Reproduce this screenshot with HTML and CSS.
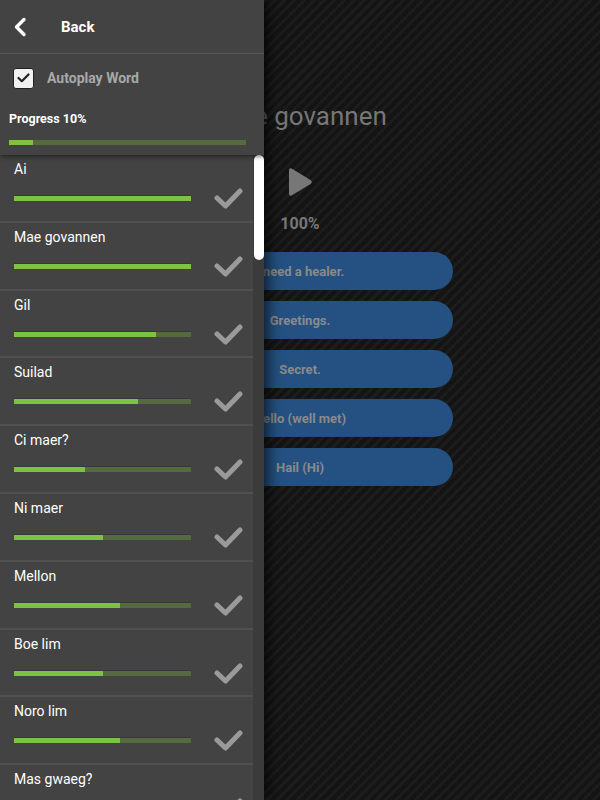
FILE: index.html
```html
<!DOCTYPE html>
<html>
<head>
<meta charset="utf-8">
<link rel="stylesheet" href="styles.css">
</head>
<body>
<div class="app">
  <main class="main">
    <h1 class="title">Mae govannen</h1>
    <svg class="play" width="28" height="32" viewBox="0 0 28 32"><path d="M3 4.5 Q3 1 6 2.8 L24.5 14 Q27 16 24.5 18 L6 29.2 Q3 31 3 27.5 Z" fill="#777"/></svg>
    <div class="pct">100%</div>
    <div class="answers">
      <div class="answer">I need a healer.</div>
      <div class="answer">Greetings.</div>
      <div class="answer">Secret.</div>
      <div class="answer">Hello (well met)</div>
      <div class="answer">Hail (Hi)</div>
    </div>
  </main>
  <aside class="drawer">
    <div class="head">
      <div class="back">
        <svg class="chev" width="14" height="20" viewBox="0 0 14 20"><polyline points="11,2.5 3.5,10 11,17.5" fill="none" stroke="#fff" stroke-width="3.4" stroke-linecap="round" stroke-linejoin="round"/></svg>
        <span class="back-text">Back</span>
      </div>
      <div class="auto">
        <span class="box"><svg width="13" height="10" viewBox="0 0 13 10"><polyline points="1.5,5 4.8,8.2 11.5,1.5" fill="none" stroke="#222" stroke-width="2.2" stroke-linecap="round" stroke-linejoin="round"/></svg></span>
        <span class="auto-text">Autoplay Word</span>
      </div>
      <div class="prog-label">Progress 10%</div>
      <div class="prog"><div class="prog-fill" style="width:10%"></div></div>
    </div>
    <div class="body">
      <div class="list">
        <div class="item"><div class="name">Ai</div><div class="row"><div class="bar"><div class="fill" style="width:100%"></div></div><svg class="ok" width="30" height="22" viewBox="0 0 30 22"><polyline points="3,11 11.5,19 26,4" fill="none" stroke="#9a9a9a" stroke-width="5" stroke-linecap="round" stroke-linejoin="round"/></svg></div></div>
        <div class="item"><div class="name">Mae govannen</div><div class="row"><div class="bar"><div class="fill" style="width:100%"></div></div><svg class="ok" width="30" height="22" viewBox="0 0 30 22"><polyline points="3,11 11.5,19 26,4" fill="none" stroke="#9a9a9a" stroke-width="5" stroke-linecap="round" stroke-linejoin="round"/></svg></div></div>
        <div class="item"><div class="name">Gil</div><div class="row"><div class="bar"><div class="fill" style="width:80%"></div></div><svg class="ok" width="30" height="22" viewBox="0 0 30 22"><polyline points="3,11 11.5,19 26,4" fill="none" stroke="#9a9a9a" stroke-width="5" stroke-linecap="round" stroke-linejoin="round"/></svg></div></div>
        <div class="item"><div class="name">Suilad</div><div class="row"><div class="bar"><div class="fill" style="width:70%"></div></div><svg class="ok" width="30" height="22" viewBox="0 0 30 22"><polyline points="3,11 11.5,19 26,4" fill="none" stroke="#9a9a9a" stroke-width="5" stroke-linecap="round" stroke-linejoin="round"/></svg></div></div>
        <div class="item"><div class="name">Ci maer?</div><div class="row"><div class="bar"><div class="fill" style="width:40%"></div></div><svg class="ok" width="30" height="22" viewBox="0 0 30 22"><polyline points="3,11 11.5,19 26,4" fill="none" stroke="#9a9a9a" stroke-width="5" stroke-linecap="round" stroke-linejoin="round"/></svg></div></div>
        <div class="item"><div class="name">Ni maer</div><div class="row"><div class="bar"><div class="fill" style="width:50%"></div></div><svg class="ok" width="30" height="22" viewBox="0 0 30 22"><polyline points="3,11 11.5,19 26,4" fill="none" stroke="#9a9a9a" stroke-width="5" stroke-linecap="round" stroke-linejoin="round"/></svg></div></div>
        <div class="item"><div class="name">Mellon</div><div class="row"><div class="bar"><div class="fill" style="width:60%"></div></div><svg class="ok" width="30" height="22" viewBox="0 0 30 22"><polyline points="3,11 11.5,19 26,4" fill="none" stroke="#9a9a9a" stroke-width="5" stroke-linecap="round" stroke-linejoin="round"/></svg></div></div>
        <div class="item"><div class="name">Boe lim</div><div class="row"><div class="bar"><div class="fill" style="width:50%"></div></div><svg class="ok" width="30" height="22" viewBox="0 0 30 22"><polyline points="3,11 11.5,19 26,4" fill="none" stroke="#9a9a9a" stroke-width="5" stroke-linecap="round" stroke-linejoin="round"/></svg></div></div>
        <div class="item"><div class="name">Noro lim</div><div class="row"><div class="bar"><div class="fill" style="width:60%"></div></div><svg class="ok" width="30" height="22" viewBox="0 0 30 22"><polyline points="3,11 11.5,19 26,4" fill="none" stroke="#9a9a9a" stroke-width="5" stroke-linecap="round" stroke-linejoin="round"/></svg></div></div>
        <div class="item"><div class="name">Mas gwaeg?</div><div class="row"><div class="bar"><div class="fill" style="width:50%"></div></div><svg class="ok" width="30" height="22" viewBox="0 0 30 22"><polyline points="3,11 11.5,19 26,4" fill="none" stroke="#9a9a9a" stroke-width="5" stroke-linecap="round" stroke-linejoin="round"/></svg></div></div>
      </div>
      <div class="track"><div class="thumb"></div></div>
    </div>
  </aside>
</div>
</body>
</html>
```

FILE: styles.css
```css
* { box-sizing: border-box; }
html, body { margin: 0; padding: 0; }
body {
  width: 600px;
  height: 800px;
  overflow: hidden;
  font-family: Roboto, "Liberation Sans", sans-serif;
  background: #151515;
}
.app {
  position: relative;
  width: 600px;
  height: 800px;
  overflow: hidden;
  background: repeating-linear-gradient(135deg, #141414 0 4px, #1c1c1c 4px 7px);
}
.main {
  display: flex;
  flex-direction: column;
  align-items: center;
  padding-top: 101px;
}
.title {
  margin: 0;
  font-size: 26px;
  line-height: 30px;
  font-weight: 400;
  color: #777;
  padding-left: 4px;
}
.play {
  display: block;
  margin-top: 35px;
}
.pct {
  margin-top: 16px;
  font-size: 16px;
  line-height: 20px;
  font-weight: 700;
  color: #777;
}
.answers {
  margin-top: 18px;
  display: flex;
  flex-direction: column;
  gap: 11px;
}
.answer {
  width: 306px;
  height: 38px;
  border-radius: 19px;
  background: #245181;
  color: #8a8a8a;
  font-size: 13px;
  font-weight: 700;
  display: flex;
  align-items: center;
  justify-content: center;
}
.drawer {
  position: absolute;
  left: 0;
  top: 0;
  bottom: 0;
  width: 264px;
  background: #434343;
  box-shadow: 3px 0 14px rgba(0,0,0,0.75);
  display: flex;
  flex-direction: column;
}
.head {
  position: relative;
  z-index: 2;
  background: #434343;
  box-shadow: 0 2px 4px rgba(0,0,0,0.45);
  padding-bottom: 10px;
}
.back {
  height: 54px;
  border-bottom: 1px solid #555;
  display: flex;
  align-items: center;
}
.chev {
  margin-left: 13px;
}
.back-text {
  margin-left: 34px;
  color: #fff;
  font-weight: 700;
  font-size: 15px;
}
.auto {
  height: 48px;
  display: flex;
  align-items: center;
  padding-left: 13px;
}
.box {
  width: 21px;
  height: 21px;
  border-radius: 3px;
  background: #f1f1f1;
  border: 1px solid #222;
  display: flex;
  align-items: center;
  justify-content: center;
}
.auto-text {
  margin-left: 13px;
  color: #a8a8a8;
  font-weight: 700;
  font-size: 14px;
}
.prog-label {
  margin-top: 9px;
  padding-left: 9px;
  color: #fff;
  font-weight: 700;
  font-size: 12.5px;
  line-height: 15px;
}
.prog {
  margin: 14px 0 0 9px;
  width: 237px;
  height: 5px;
  background: #556b3f;
}
.prog-fill {
  height: 100%;
  background: #7dc243;
}
.body {
  flex: 1;
  display: flex;
  min-height: 0;
}
.list {
  width: 253px;
}
.item {
  height: 67.8px;
  border-bottom: 2px solid #505050;
  padding: 6px 0 0 14px;
}
.name {
  color: #fff;
  font-size: 14px;
  line-height: 16px;
}
.row {
  margin-top: 10px;
  display: flex;
  align-items: center;
}
.bar {
  width: 177px;
  height: 6px;
  background: #556b3f;
  border-top: 1px solid #3a3540;
}
.fill {
  height: 100%;
  background: #7dc243;
}
.ok {
  margin-left: 23px;
}
.track {
  width: 11px;
  background: #3b3b3b;
}
.thumb {
  width: 10px;
  margin-left: 1px;
  height: 105px;
  background: #fff;
  border-radius: 5px;
}
```
